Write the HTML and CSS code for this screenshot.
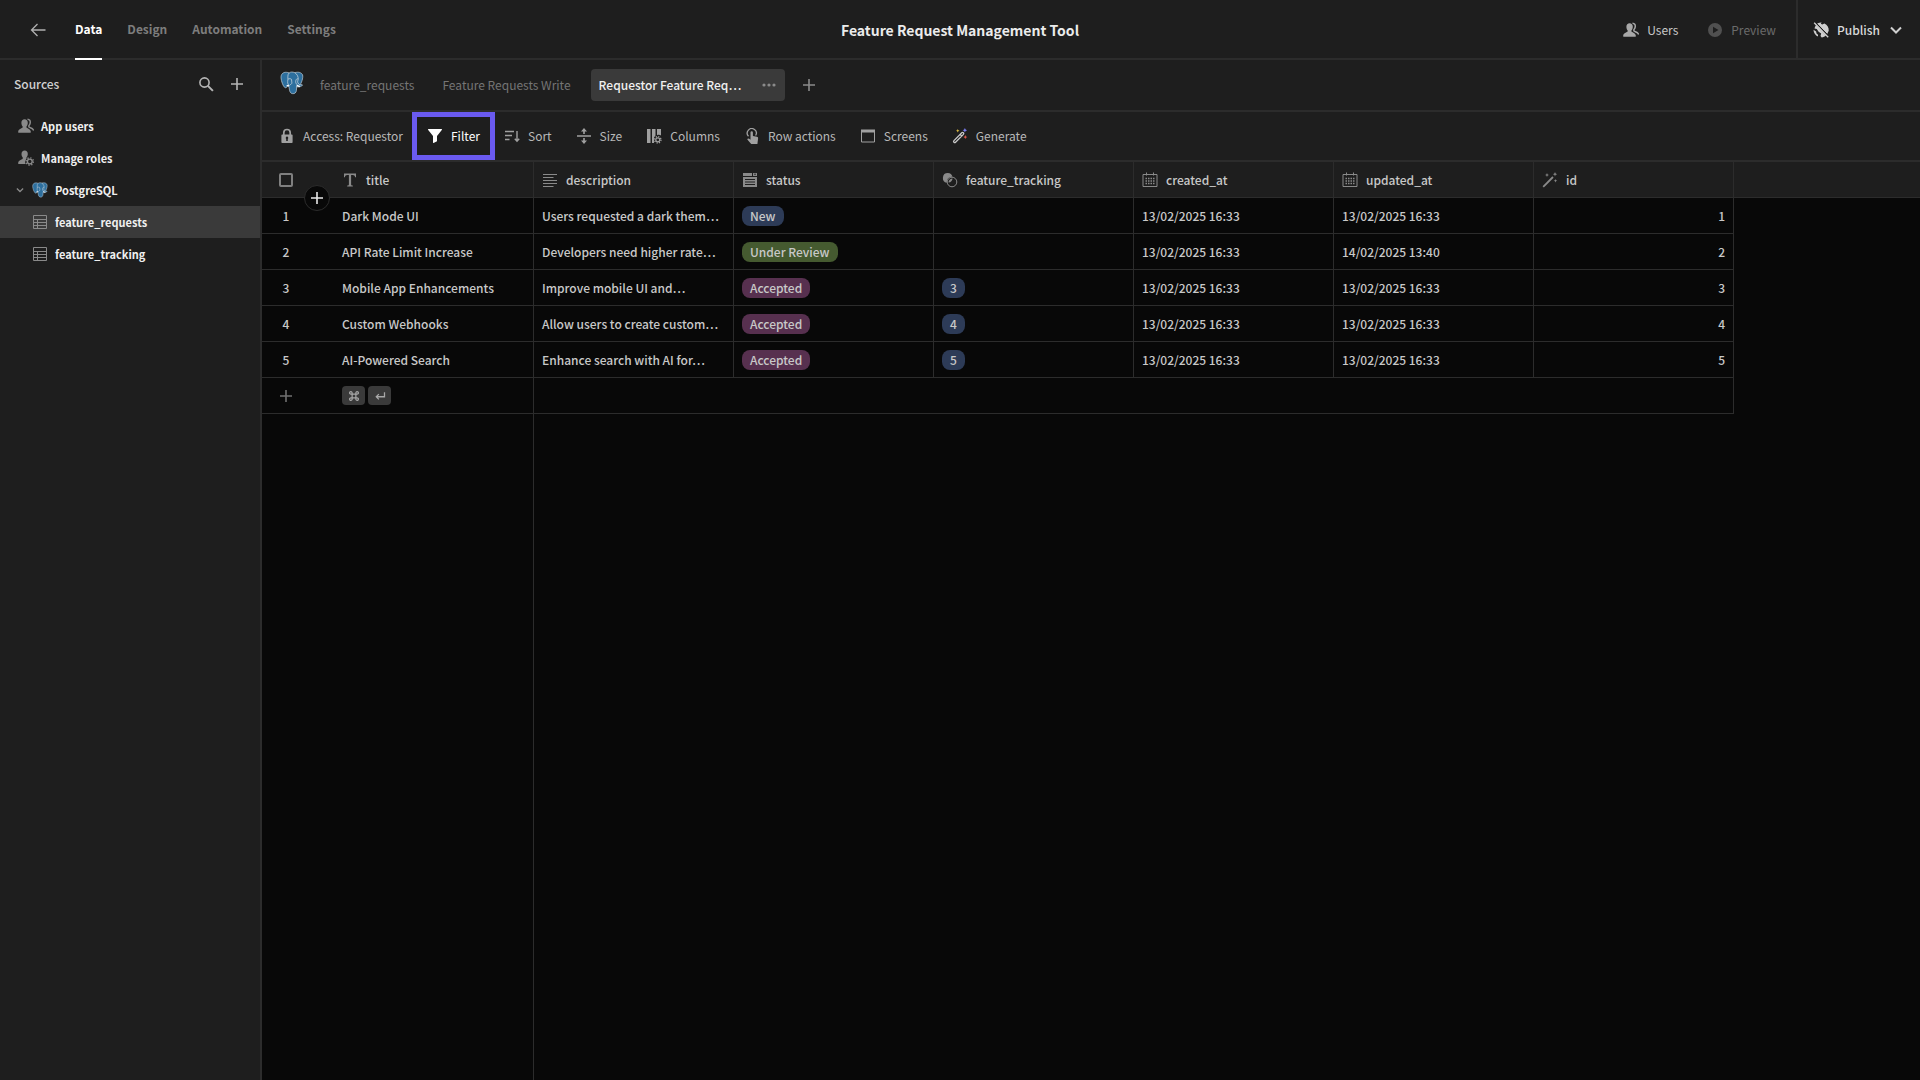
FILE: index.html
```html
<!DOCTYPE html>
<html lang="en">
<head>
<meta charset="utf-8">
<title>Feature Request Management Tool</title>
<link rel="stylesheet" href="styles.css">
</head>
<body>
<svg class="sprite" aria-hidden="true">
  <symbol id="i-back" viewBox="0 0 16 16"><path d="M15.500 8H1.500M7.500 2 1.500 8l6 6" fill="none" stroke="currentColor" stroke-width="1.300"/></symbol>
  <symbol id="i-users" viewBox="0 0 16 16"><path d="M6.600 1.200c2 0 3.200 1.400 3.200 3.500 0 1.500-.5 2.800-1.300 3.600v1.200c0 .5 3.900 1.300 4.300 4 .1.700-.1 1.300-.6 1.300H.8c-.5 0-.7-.6-.6-1.300.4-2.700 4.400-3.500 4.400-4V8.300C3.800 7.500 3.400 6.200 3.400 4.700c0-2.100 1.200-3.500 3.200-3.500Z" fill="currentColor"/><path d="M9.500 1.200c2 .1 3 1.500 2.700 3.600-.2 1.500-.9 2.300-1.300 2.900v1.200c.6.900 4 1.300 4.800 3.600" fill="none" stroke="currentColor" stroke-width="1.500"/></symbol>
  <symbol id="i-role" viewBox="0 0 16 16"><path d="M6.700.5c2 0 3.100 1.400 3.100 3.400 0 1.500-.6 2.700-1.300 3.400v1.100L7.700 10c-.8 1.200-.7 2.800 0 4H.8c-.5 0-.7-.6-.6-1.300.4-2.600 4.500-3.300 4.500-3.900V7.300C4 6.600 3.500 5.400 3.500 3.900 3.500 1.900 4.700.5 6.700.5Z" fill="currentColor"/><circle cx="11.800" cy="11.500" r="2.400" fill="none" stroke="currentColor" stroke-width="1.400"/><circle cx="11.800" cy="11.500" r="3.700" fill="none" stroke="currentColor" stroke-width="1.400" stroke-dasharray="1.300 1.606"/></symbol>
  <symbol id="i-search" viewBox="0 0 16 16"><circle cx="6.500" cy="6.500" r="4.600" fill="none" stroke="currentColor" stroke-width="1.600"/><path d="m9.900 9.900 5 5" stroke="currentColor" stroke-width="2"/></symbol>
  <symbol id="i-plus" viewBox="0 0 16 16"><path d="M8 2v12M2 8h12" stroke="currentColor" stroke-width="1.600"/></symbol>
  <symbol id="i-chev" viewBox="0 0 16 16"><path d="m3 5.500 5 5 5-5" fill="none" stroke="currentColor" stroke-width="2"/></symbol>
  <symbol id="i-table" viewBox="0 0 16 16"><path d="M1.500 1.500h13v13h-13zM1.500 5.500h13M1.500 8.500h13M1.500 11.500h13M5.500 5.500v9" fill="none" stroke="currentColor"/></symbol>
  <symbol id="i-pg" viewBox="0 0 24 24">
    <path d="M6.500 1.300C3 1 .8 3.200 1 6.800c.2 3.200 2 8.200 3.700 9.600 1.200 1 2.300-.4 3-1.300l1.200.6c.6 1.200.1 6.300 3.300 6.900 2.600.5 4-1.100 4.200-3.200l.3-3.600c2.800.5 5.300-.5 5.800-1.700.1-.6-1.300-.4-2.300-.5 2-3 3.400-8.600 2-10.400-2-2.600-5.300-2-7.500-1.600C12.400.8 10.700.8 9.200 1.900c-1-.4-1.800-.5-2.700-.6Z" fill="#2d6f9e" stroke="#c2d0da" stroke-width=".7"/>
    <path d="M9.200 1.900C6.800 4 8.500 7.500 7.700 10.400c-.5 2 1.200 3.500 1.200 5.300M14.700 1.600c2.800 1.900 3.600 4.300 3.500 6.400-.1 1.500-.9 2.300-.4 3.700.4 1 1.300 1.900 2.400 2.400M7.900 8.200c1.300-.8 3.800-.8 3.700.8 0 1.500.6 2.800 0 3.700-.6 1-1.800.8-2.500 2M16.700 16.100l.4-2.200c.2-.8-.9-.7-1.200-1.700-.3-1.200-.6-4.700 2.300-4.400" fill="none" stroke="#c2d0da" stroke-width=".8"/>
    <path d="m17 14.300 2.800 1.300M6.600 14.900l2.200-.5" stroke="#fff" stroke-width="1.300"/>
  </symbol>
  <symbol id="i-lock" viewBox="0 0 16 16"><path d="M4.800 7V4.700a3.200 3.200 0 0 1 6.400 0V7" fill="none" stroke="currentColor" stroke-width="1.700"/><path fill-rule="evenodd" d="M3.200 6.500h9.600a.8.800 0 0 1 .8.800v6.900a.8.800 0 0 1-.8.800H3.200a.8.800 0 0 1-.8-.8V7.300a.8.800 0 0 1 .8-.8ZM8 8.600a1.300 1.300 0 0 0-.8 2.300v2h1.600v-2A1.300 1.300 0 0 0 8 8.600Z" fill="currentColor"/></symbol>
  <symbol id="i-filter" viewBox="0 0 16 16"><path d="M1.600 1h12.800c.5 0 .8.500.4.900L10 8v5.200L6.600 15c-.3.200-.6 0-.6-.4V8L1.200 1.900c-.4-.4-.1-.9.400-.9Z" fill="currentColor"/></symbol>
  <symbol id="i-sort" viewBox="0 0 16 16"><path d="M1 3.500h9M1 7.500h7M1 11.500h4.500M13 3v10M10.800 10.800 13 13.200l2.200-2.400" fill="none" stroke="currentColor" stroke-width="1.400"/></symbol>
  <symbol id="i-size" viewBox="0 0 16 16"><path d="M1 8h14" stroke="currentColor" stroke-width="1.500"/><path d="M8 0l3 3.500H8.800V6H7.200V3.500H5zM8 16l3-3.500H8.800V10H7.200v2.500H5z" fill="currentColor"/></symbol>
  <symbol id="i-cols" viewBox="0 0 16 16"><path d="M1 1h3.500v14H1zM6 1h3.500v6.500L8 9.500V15H6zM11 1h4v6.500c-1.200-.8-2.700-.8-4-.2z" fill="currentColor"/><circle cx="11.800" cy="11.800" r="2" fill="none" stroke="currentColor" stroke-width="1.200"/><circle cx="11.800" cy="11.800" r="3.200" fill="none" stroke="currentColor" stroke-width="1.300" stroke-dasharray="1.200 1.313"/></symbol>
  <symbol id="i-tap" viewBox="0 0 16 16"><path d="M4.500 8.200A4.500 4.500 0 1 1 11.600 7.500" fill="none" stroke="currentColor" stroke-width="1.300"/><path d="M6.500 4.500a1.200 1.200 0 0 1 2.400 0V8l4 .8c.9.200 1.300.8 1.200 1.600L13.400 16H7.200c-1.300-1.500-2.600-3.200-4-4.800.7-1 1.700-.7 3.300.5z" fill="currentColor"/></symbol>
  <symbol id="i-screen" viewBox="0 0 16 16"><path d="M1.500 2.500h13v11.500h-13z" fill="none" stroke="currentColor"/><path d="M1 1.500h14v3H1z" fill="currentColor"/></symbol>
  <symbol id="i-gen" viewBox="0 0 18 18"><path d="M2.200 14.200 11 5.400c1.200-1.200 3 .5 1.800 1.800L4 16c-1.200 1.200-3-.6-1.800-1.800ZM9.200 7.200l1.800 1.800" fill="none" stroke="#c8c8c8" stroke-width="1.500"/><path d="m6.500 1 .6 1.400 1.400.6-1.400.6L6.500 5l-.6-1.400L4.500 3l1.400-.6z" fill="#e5c244"/><path d="m14.500 0 .8 1.700 1.700.8-1.700.8-.8 1.700-.8-1.700-1.700-.8 1.700-.8z" fill="#7a7df0"/><path d="m15 8 .7 1.500 1.500.7-1.500.7-.7 1.500-.7-1.500-1.500-.7 1.500-.7z" fill="#e0584c"/></symbol>
  <symbol id="i-play" viewBox="0 0 16 16"><path fill-rule="evenodd" d="M8 1a7 7 0 1 0 0 14A7 7 0 0 0 8 1ZM6 4.700 11.500 8 6 11.300z" fill="currentColor"/></symbol>
  <symbol id="i-globe" viewBox="0 0 16 16"><path d="M4.800 1.200C6 .5 7.400.3 8.600.4l-.8 1.300 1.400.8 2.200-.9c3 1.400 4.600 4 4.300 7.200l-1.500 3.100L4 1.800zM3 3.300l9.900 10.300c-1.100 1-2.500 1.700-4.200 1.900l-1.200-1.600.7-2.300-2.600-1.800L3.800 7 1.500 6.400c.2-1.200.8-2.300 1.500-3.100ZM.5 7.800l2.600 1.600.4 2 1.500 1.300v1.900C2.300 13.300.6 11 .5 7.800Z" fill="currentColor"/><path d="m1.200.8 14 14.400" stroke="currentColor" stroke-width="1.400"/><path d="m2.600.4 13.600 14" stroke="#1e1e1e" stroke-width="1"/></symbol>
  <symbol id="i-text" viewBox="0 0 16 16"><path d="M2 1.500h12v3.700h-.9c-.2-1.600-.8-2.300-2.500-2.300H9.100v9.300c0 .9.300 1.200 1.700 1.300v.9H5.200v-.9c1.400-.1 1.700-.4 1.700-1.300V2.900H5.400c-1.700 0-2.300.7-2.500 2.300H2z" fill="currentColor"/></symbol>
  <symbol id="i-para" viewBox="0 0 16 16"><path d="M1 2.500h14M1 5.500h10.500M1 8.500h14M1 11.500h14M1 14.500h10.500" stroke="currentColor" stroke-width="1.200"/></symbol>
  <symbol id="i-opts" viewBox="0 0 16 16"><path fill-rule="evenodd" d="M1 1h9v3H1zM11 1h4v3h-4zM1 5h14v10H1zM3 7v1h10V7zM3 9.500v1h10v-1zM3 12v1h10v-1z" fill="currentColor"/><path d="m11.800 1.800 1.200 1.400 1.200-1.400z" fill="#1e1e1e"/></symbol>
  <symbol id="i-rel" viewBox="0 0 16 16"><path d="M5.800 1a4.900 4.900 0 0 1 4.700 3.800 5 5 0 0 0-5.700 5.900A4.900 4.900 0 0 1 5.800 1Z" fill="currentColor"/><path d="M10.600 6.500A4.800 4.800 0 0 1 6.500 10.600 4 4 0 0 1 10.600 6.500Z" fill="currentColor"/><circle cx="10" cy="10" r="4.800" fill="none" stroke="currentColor" stroke-width="1"/></symbol>
  <symbol id="i-cal" viewBox="0 0 16 16"><path d="M1 2.500h14v12H1zM4.500.5v3M11.500.5v3" fill="none" stroke="currentColor"/><path d="M3.500 6.500h9M3.500 9h9M3.500 11.500h9" stroke="currentColor" stroke-width="1.500" stroke-dasharray="1.500 1"/></symbol>
  <symbol id="i-wand" viewBox="0 0 16 16"><path d="M1.200 14.800 11 5" stroke="currentColor" stroke-width="1.800"/><path d="m5 1 .6 1.400L7 3l-1.400.6L5 5l-.6-1.400L3 3l1.400-.6zM13 0l.6 1.600 1.600.6-1.600.6L13 4.400l-.6-1.600-1.600-.6 1.600-.6zM13.500 7l.5 1.300 1.300.5-1.300.5-.5 1.300-.5-1.300-1.300-.5 1.300-.5z" fill="currentColor"/></symbol>
  <symbol id="i-more" viewBox="0 0 16 16"><circle cx="3" cy="8" r="1.600" fill="currentColor"/><circle cx="8" cy="8" r="1.600" fill="currentColor"/><circle cx="13" cy="8" r="1.600" fill="currentColor"/></symbol>
  <symbol id="i-cmd" viewBox="0 0 16 16"><path d="M5.500 5.500h5v5h-5zM5.500 5.500H4A1.700 1.700 0 1 1 5.500 4zM10.500 5.500V4A1.700 1.700 0 1 1 12 5.500zM5.500 10.500V12A1.700 1.700 0 1 1 4 10.500zM10.500 10.500H12a1.700 1.700 0 1 1-1.500 1.500z" fill="none" stroke="currentColor" stroke-width="1.600"/></symbol>
  <symbol id="i-enter" viewBox="0 0 16 16"><path d="M14 3v6H3M6.500 5.500 3 9l3.500 3.500" fill="none" stroke="currentColor" stroke-width="1.700"/></symbol>
</svg>

<div class="app">
  <header class="topbar">
    <nav class="nav" aria-label="Sections">
      <a class="back" href="#" aria-label="Back"><svg class="icon"><use href="#i-back"/></svg></a>
      <a class="nav-link active" href="#">Data</a>
      <a class="nav-link" href="#">Design</a>
      <a class="nav-link" href="#">Automation</a>
      <a class="nav-link" href="#">Settings</a>
    </nav>
    <h1 class="app-title">Feature Request Management Tool</h1>
    <div class="actions">
      <button class="action" type="button"><svg class="icon"><use href="#i-users"/></svg>Users</button>
      <button class="action off" type="button" disabled><svg class="icon"><use href="#i-play"/></svg>Preview</button>
      <button class="action publish" type="button"><svg class="icon"><use href="#i-globe"/></svg>Publish<svg class="icon"><use href="#i-chev"/></svg></button>
    </div>
  </header>

  <div class="body">
    <aside class="sidebar">
      <div class="side-head">
        <h2 class="side-title">Sources</h2>
        <button class="icon-btn" type="button" aria-label="Search"><svg class="icon"><use href="#i-search"/></svg></button>
        <button class="icon-btn" type="button" aria-label="Add source"><svg class="icon"><use href="#i-plus"/></svg></button>
      </div>
      <ul class="tree">
        <li><a class="tree-item" href="#"><svg class="icon"><use href="#i-users"/></svg>App users</a></li>
        <li><a class="tree-item" href="#"><svg class="icon"><use href="#i-role"/></svg>Manage roles</a></li>
        <li><a class="tree-item source" href="#"><svg class="icon tiny"><use href="#i-chev"/></svg><svg class="icon"><use href="#i-pg"/></svg>PostgreSQL</a></li>
        <li><a class="tree-item child selected" href="#"><svg class="icon"><use href="#i-table"/></svg>feature_requests</a></li>
        <li><a class="tree-item child" href="#"><svg class="icon"><use href="#i-table"/></svg>feature_tracking</a></li>
      </ul>
    </aside>

    <main class="main">
      <div class="tabs">
        <svg class="logo"><use href="#i-pg"/></svg>
        <a class="tab" href="#">feature_requests</a>
        <a class="tab" href="#">Feature Requests Write</a>
        <div class="tab current"><a class="tab-name" href="#">Requestor Feature Req…</a><button class="icon-btn" type="button" aria-label="View options"><svg class="icon"><use href="#i-more"/></svg></button></div>
        <button class="icon-btn add-view" type="button" aria-label="Add view"><svg class="icon"><use href="#i-plus"/></svg></button>
      </div>
      <div class="toolbar">
        <button class="tool" type="button"><svg class="icon"><use href="#i-lock"/></svg>Access: Requestor</button>
        <button class="tool marked" type="button"><svg class="icon"><use href="#i-filter"/></svg>Filter</button>
        <button class="tool" type="button"><svg class="icon"><use href="#i-sort"/></svg>Sort</button>
        <button class="tool" type="button"><svg class="icon"><use href="#i-size"/></svg>Size</button>
        <button class="tool" type="button"><svg class="icon"><use href="#i-cols"/></svg>Columns</button>
        <button class="tool" type="button"><svg class="icon"><use href="#i-tap"/></svg>Row actions</button>
        <button class="tool" type="button"><svg class="icon"><use href="#i-screen"/></svg>Screens</button>
        <button class="tool" type="button"><svg class="icon"><use href="#i-gen"/></svg>Generate</button>
      </div>
      <div class="sheet">
        <button class="insert" type="button" aria-label="Add row"><svg class="icon"><use href="#i-plus"/></svg></button>
        <table class="grid">
          <colgroup><col class="c-gutter"><col class="c-data"><col class="c-data"><col class="c-data"><col class="c-data"><col class="c-data"><col class="c-data"><col class="c-data"><col></colgroup>
          <thead>
            <tr>
              <th class="gutter"><input class="check" type="checkbox" aria-label="Select all rows"></th>
              <th><span class="head"><svg class="icon"><use href="#i-text"/></svg>title</span></th>
              <th><span class="head"><svg class="icon"><use href="#i-para"/></svg>description</span></th>
              <th><span class="head"><svg class="icon"><use href="#i-opts"/></svg>status</span></th>
              <th><span class="head"><svg class="icon"><use href="#i-rel"/></svg>feature_tracking</span></th>
              <th><span class="head"><svg class="icon"><use href="#i-cal"/></svg>created_at</span></th>
              <th><span class="head"><svg class="icon"><use href="#i-cal"/></svg>updated_at</span></th>
              <th><span class="head"><svg class="icon"><use href="#i-wand"/></svg>id</span></th>
              <th class="rest"></th>
            </tr>
          </thead>
          <tbody>
            <tr><td class="gutter">1</td><td>Dark Mode UI</td><td>Users requested a dark them…</td><td><span class="tag blue">New</span></td><td></td><td>13/02/2025 16:33</td><td>13/02/2025 16:33</td><td class="num">1</td></tr>
            <tr><td class="gutter">2</td><td>API Rate Limit Increase</td><td>Developers need higher rate…</td><td><span class="tag green">Under Review</span></td><td></td><td>13/02/2025 16:33</td><td>14/02/2025 13:40</td><td class="num">2</td></tr>
            <tr><td class="gutter">3</td><td>Mobile App Enhancements</td><td>Improve mobile UI and…</td><td><span class="tag plum">Accepted</span></td><td><span class="tag blue">3</span></td><td>13/02/2025 16:33</td><td>13/02/2025 16:33</td><td class="num">3</td></tr>
            <tr><td class="gutter">4</td><td>Custom Webhooks</td><td>Allow users to create custom…</td><td><span class="tag plum">Accepted</span></td><td><span class="tag blue">4</span></td><td>13/02/2025 16:33</td><td>13/02/2025 16:33</td><td class="num">4</td></tr>
            <tr><td class="gutter">5</td><td>AI-Powered Search</td><td>Enhance search with AI for…</td><td><span class="tag plum">Accepted</span></td><td><span class="tag blue">5</span></td><td>13/02/2025 16:33</td><td>13/02/2025 16:33</td><td class="num">5</td></tr>
            <tr><td class="gutter"><button class="icon-btn new-row" type="button" aria-label="New row"><svg class="icon"><use href="#i-plus"/></svg></button></td><td><span class="keys"><kbd class="key"><svg class="icon small"><use href="#i-cmd"/></svg></kbd><kbd class="key"><svg class="icon small"><use href="#i-enter"/></svg></kbd></span></td><td colspan="6"></td></tr>
          </tbody>
        </table>
        <div class="below"></div>
      </div>
    </main>
  </div>
</div>
</body>
</html>
```
FILE: styles.css
```css
* { box-sizing: border-box; }

body {
  margin: 0;
  background: #1e1e1e;
  color: #c8c8c8;
  font-family: "Noto Sans CJK SC", "Open Sans", sans-serif;
  font-size: 12px;
  line-height: 20px;
}

h1, h2, ul { margin: 0; padding: 0; font-size: inherit; }
ul { list-style: none; }
a { color: inherit; text-decoration: none; }
button {
  display: flex;
  align-items: center;
  padding: 0;
  border: 0;
  background: none;
  color: inherit;
  font: inherit;
}

.sprite { position: absolute; width: 0; height: 0; }
.icon { width: 16px; height: 16px; flex: none; display: block; }
.small { width: 12px; height: 12px; }
.tiny { width: 10px; height: 10px; }

.app { display: flex; flex-direction: column; min-height: 100vh; }

/* Top bar */
.topbar {
  display: grid;
  grid-template-columns: 1fr auto 1fr;
  height: 60px;
  border-bottom: 2px solid #2c2c2c;
}
.nav { display: flex; gap: 25px; padding-left: 30px; font-weight: 700; color: #7d7d7d; }
.back { display: flex; align-items: center; margin-right: 4px; color: #b0b0b0; }
.nav-link { display: flex; align-items: center; height: 60px; border-bottom: 2px solid transparent; }
.nav-link.active { color: #fff; border-color: #fff; }
.app-title { align-self: center; font-size: 14px; color: #ebebeb; }
.actions { display: flex; justify-content: flex-end; }
.action { gap: 8px; margin-right: 29px; }
.action .icon { color: #a8a8a8; }
.action.off { margin-right: 20px; color: #6b6b6b; }
.action.off .icon { color: #505050; }
.action.publish { margin: 0; padding: 0 16px 0 15px; border-left: 2px solid #2c2c2c; font-weight: 500; color: #d8d8d8; }
.action.publish .icon { color: #d0d0d0; }

.body { display: flex; flex: 1; }

/* Sidebar */
.sidebar { width: 262px; flex: none; border-right: 2px solid #2c2c2c; }
.side-head { display: flex; align-items: center; gap: 15px; height: 50px; padding: 0 15px 2px 14px; color: #b5b5b5; }
.side-title { flex: 1; font-weight: 500; color: #d0d0d0; }
.tree-item { display: flex; align-items: center; gap: 7px; height: 32px; padding-left: 18px; font-size: 11px; font-weight: 700; color: #f0f0f0; }
.tree-item .icon { color: #8a8a8a; }
.tree-item.source { padding-left: 15px; }
.tree-item.child { padding-left: 32px; }
.tree-item.selected { background: #3a3a3a; }

/* Views */
.main { display: flex; flex-direction: column; flex: 1; min-width: 0; }
.tabs { display: flex; align-items: center; height: 52px; padding-left: 18px; border-bottom: 2px solid #2c2c2c; color: #757575; }
.logo { width: 24px; height: 24px; margin: 0 8px 4px 0; }
.tab { display: flex; align-items: center; height: 32px; padding: 0 8px; margin-right: 12px; border-radius: 4px; }
.tab.current { justify-content: space-between; width: 194px; margin-right: 16px; background: #3a3a3a; color: #f0f0f0; font-weight: 500; }
.tab.current .icon, .add-view { color: #8a8a8a; }

/* Tools */
.toolbar { display: flex; align-items: center; height: 50px; padding-left: 5px; border-bottom: 2px solid #2c2c2c; color: #b8b8b8; }
.tool { gap: 8px; height: 42px; padding: 0 12px; }
.tool .icon { color: #a0a0a0; }
.tool.marked { outline: 5px solid #6a5af0; outline-offset: -2px; color: #fff; }
.tool.marked .icon { color: #fff; }

/* Table */
.sheet { position: relative; display: flex; flex-direction: column; flex: 1; background: #080808; }
.grid { width: 100%; table-layout: fixed; border-spacing: 0; }
.c-gutter { width: 72px; }
.c-data { width: 200px; }
.grid th, .grid td {
  height: 36px;
  padding: 0 8px;
  border-right: 1px solid #2c2c2c;
  border-bottom: 1px solid #2c2c2c;
  text-align: left;
  font-weight: 500;
  white-space: nowrap;
  overflow: hidden;
}
.grid th { background: #1e1e1e; }
.grid .gutter { border-right: 0; padding: 0 40px 0 16px; text-align: center; }
.grid .rest { border-right: 0; }
.grid .num { text-align: right; }
.head { display: flex; align-items: center; gap: 8px; }
.head .icon { color: #8a8a8a; }
.check { display: block; width: 14px; height: 14px; margin: 0 auto; appearance: none; border: 2px solid #808080; border-radius: 2px; }
.tag { display: block; width: fit-content; padding: 0 8px; border-radius: 8px; }
.blue { background: #2d3b57; }
.green { background: #455a30; }
.plum { background: #57304f; }
.new-row { margin: 0 auto; color: #707070; }
.keys { display: flex; gap: 3px; }
.key { display: flex; align-items: center; justify-content: center; width: 23px; height: 19px; border-radius: 4px; background: #3a3a3a; color: #a8a8a8; }
.insert {
  position: absolute;
  left: 42px;
  top: 23px;
  justify-content: center;
  width: 26px;
  height: 26px;
  border: 1px solid #2c2c2c;
  border-radius: 50%;
  background: #080808;
  color: #e8e8e8;
}
.below { flex: 1; width: 272px; border-right: 1px solid #2c2c2c; }
```
